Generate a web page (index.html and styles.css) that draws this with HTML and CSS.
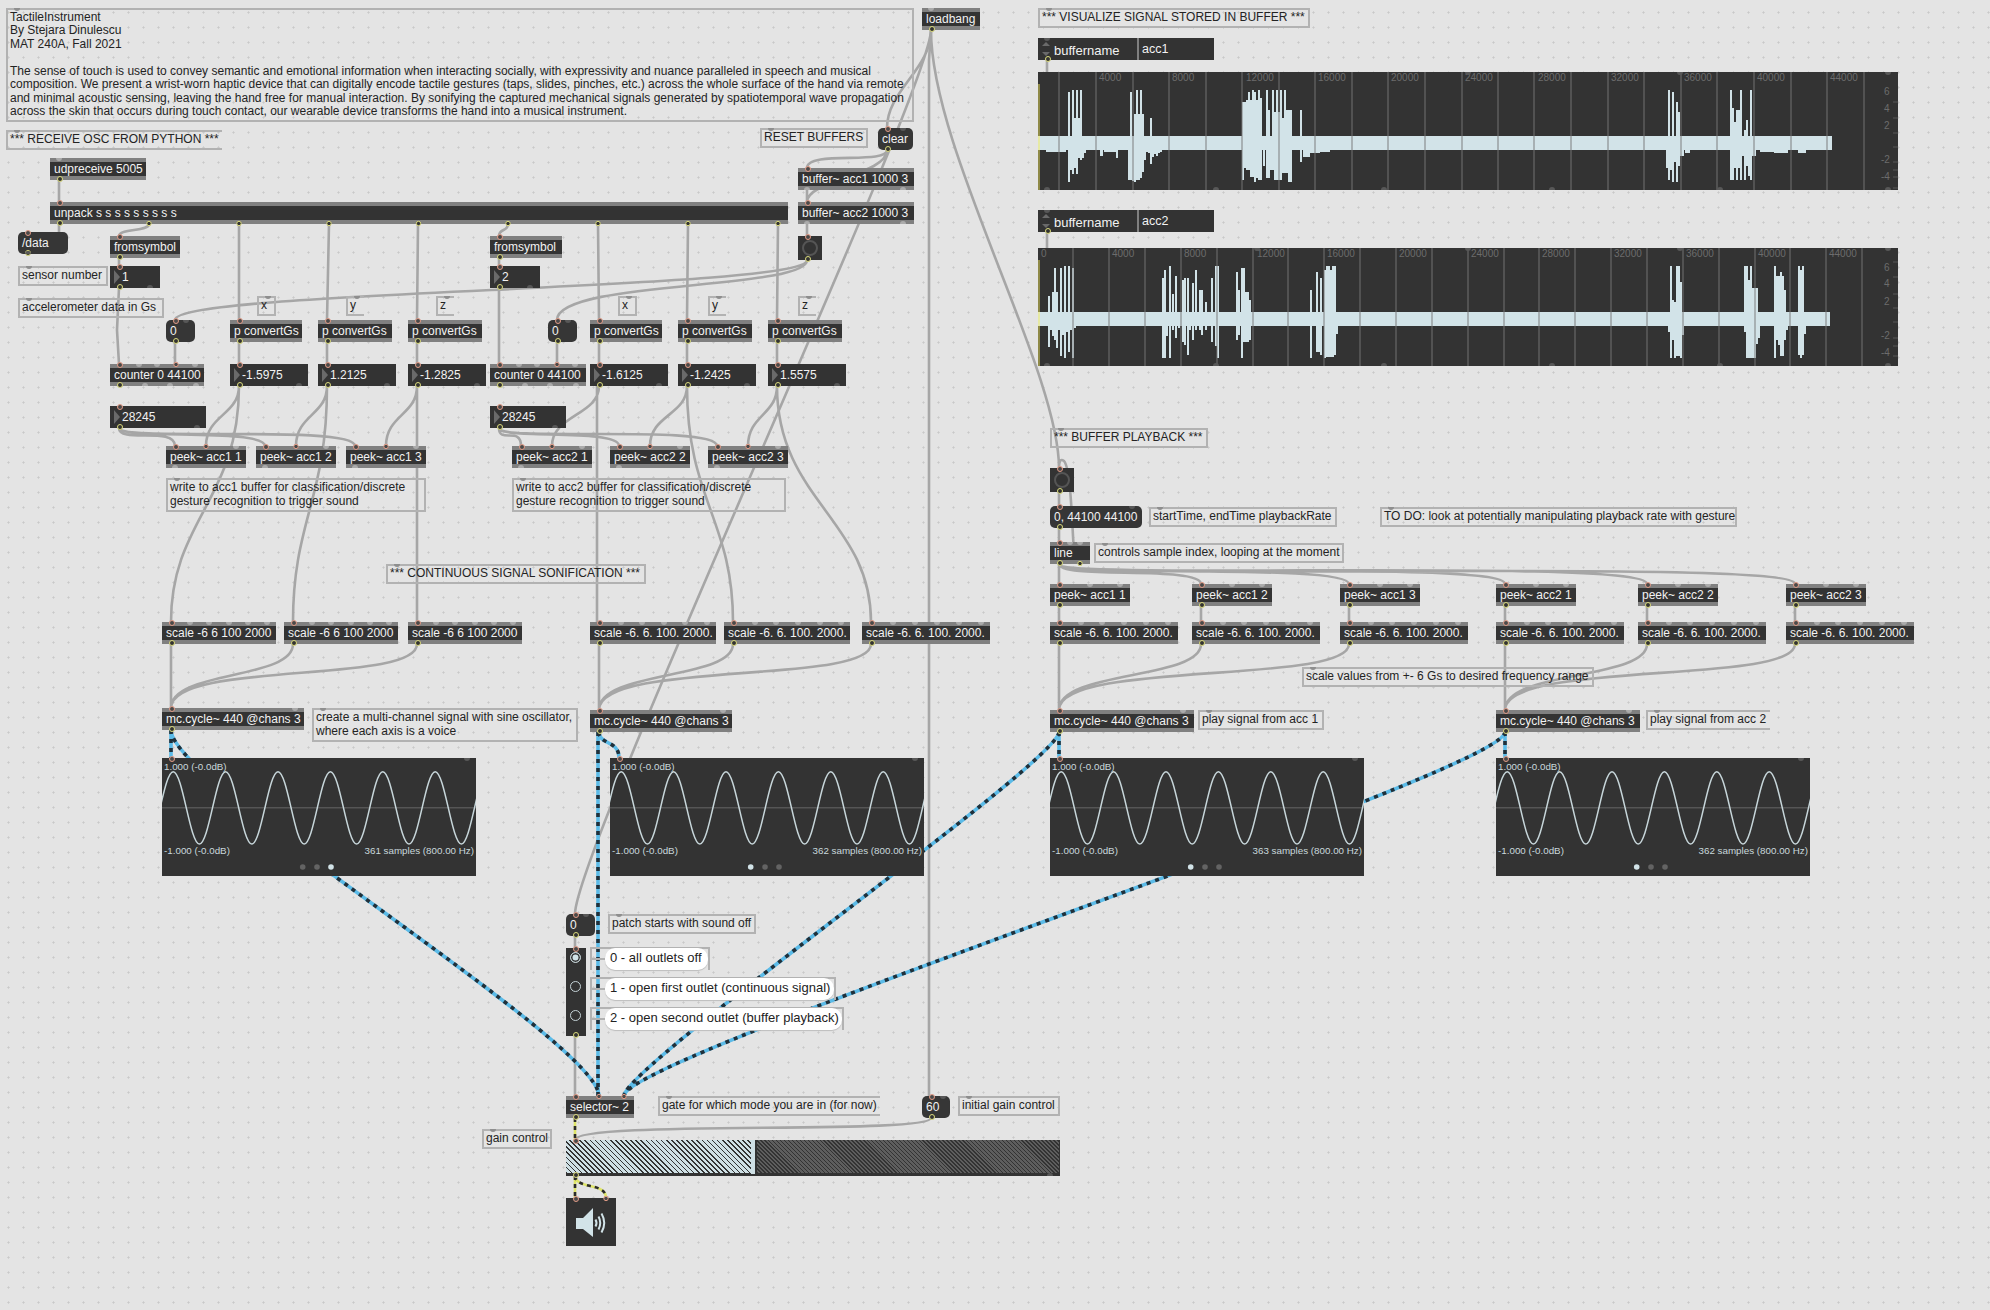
FILE: index.html
```html
<!DOCTYPE html>
<html lang="en">
<head>
<meta charset="utf-8">
<title>TactileInstrument</title>
<link rel="stylesheet" href="styles.css">
</head>
<body>
<main class="patch">

<svg class="layer" viewBox="0 0 1990 1310" aria-hidden="true">
  <defs>
    <g id="sig" fill="none">
      <path d="M171 730V758M171 730C171 784 599 1042 599 1096"/>
      <path d="M599 732C599 745 619 740 619 758M598 732V1096"/>
      <path d="M1059 732V758M1059 732C1059 762 624 1066 624 1096"/>
      <path d="M1505 732V758M1505 732C1505 772 624 1056 624 1096"/>
    </g>
    <g id="mono" fill="none">
      <path d="M575 1118V1140M575 1176V1198M575 1176C577 1190 606 1182 606 1198"/>
    </g>
  </defs>
  <g class="wire">
    <path d="M59 180V202M59 224V232M149 224C149 232 119 228 119 236M239 224V320M329 224L327 320M418 224L417 320M508 224C508 232 499 228 499 236M598 224L599 320M688 224L687 320M778 224L777 320"/>
    <path d="M119 258V266M119 288L117 330L119 364M499 258V266M499 288V364"/>
    <path d="M807 260C807 290 175 290 175 320M807 260C807 290 557 280 557 320"/>
    <path d="M931 30C931 70 887 90 887 128M931 30C931 89 575 850 575 914M887 150C887 165 807 150 807 168M887 150C887 175 807 180 807 202M807 190V202M807 224V236"/>
    <path d="M175 342V364M557 342V364M239 342V364M327 342V364M417 342V364M599 342V364M687 342V364M777 342V364"/>
    <path d="M119 428C119 444 175 426 175 446M119 428C119 440 265 428 265 446M119 428C119 442 355 424 355 446"/>
    <path d="M499 428C499 444 521 426 521 446M499 428C499 440 619 428 619 446M499 428C499 442 717 424 717 446"/>
    <path d="M239 386C239 415 206 415 206 446M239 386C239 500 171 520 171 622M327 386C327 415 296 415 296 446M327 386C327 500 293 520 293 622M417 386C417 415 386 415 386 446M417 386V622"/>
    <path d="M599 386C599 415 552 415 552 446M597 386V622M687 386C687 415 650 415 650 446M687 386C687 500 733 520 733 622M777 386C777 415 748 415 748 446M777 386C777 500 871 520 871 622"/>
    <path d="M171 644V708M293 644C293 680 171 670 171 708M417 644C417 685 171 660 171 708"/>
    <path d="M599 644V710M733 644C733 680 599 670 599 710M871 644C871 685 599 660 599 710"/>
    <path d="M1059 644V710M1201 644C1201 680 1059 670 1059 710M1349 644C1349 685 1059 660 1059 710"/>
    <path d="M1505 644V710M1647 644C1647 680 1505 670 1505 710M1795 644C1795 685 1505 660 1505 710"/>
    <path d="M1059 606V622M1201 606V622M1349 606V622M1505 606V622M1647 606V622M1795 606V622"/>
    <path d="M1059 492V506M1059 528V542M1075 563C1072 540 1072 470 1064 461C1060 458 1059 462 1059 468M931 30C931 150 1059 370 1059 468M931 30L929 60V1096"/>
    <path d="M1059 564V584M1059 564C1059 580 1201 565 1201 584M1059 564C1059 578 1349 563 1349 584M1059 564C1059 580 1505 560 1505 584M1059 564C1059 580 1647 558 1647 584M1059 564C1059 582 1795 558 1795 584"/>
    <path d="M1047 60V72M1047 232V248M575 936V948M575 1036V1096M931 1118C931 1135 575 1120 575 1140"/>
  </g>
  <use href="#sig" class="sig-base"/>
  <use href="#sig" class="sig-dash"/>
  <use href="#mono" class="mono-base"/>
  <use href="#mono" class="mono-dash"/>
</svg>

<div class="c tall-a" style="left:6px;top:8px;width:908px;height:114px">TactileInstrument<br>By Stejara Dinulescu<br>MAT 240A, Fall 2021<br><br>The sense of touch is used to convey semantic and emotional information when interacting socially, with expressivity and nuance paralleled in speech and musical<br>composition. We present a wrist-worn haptic device that can digitally encode tactile gestures (taps, slides, pinches, etc.) across the whole surface of the hand via remote<br>and minimal acoustic sensing, leaving the hand free for manual interaction. By sonifying the captured mechanical signals generated by spatiotemporal wave propagation<br>across the skin that occurs during touch contact, our wearable device transforms the hand into a musical instrument.</div>
<div class="c open" style="left:6px;top:130px;width:216px">*** RECEIVE OSC FROM PYTHON ***</div>
<div class="c" style="left:760px;top:128px;width:108px">RESET BUFFERS</div>
<div class="c" style="left:18px;top:266px;width:90px">sensor number</div>
<div class="c" style="left:18px;top:298px;width:146px">accelerometer data in Gs</div>
<div class="c" style="left:257px;top:296px;width:19px">x</div>
<div class="c open" style="left:346px;top:296px;width:18px">y</div>
<div class="c open" style="left:436px;top:296px;width:18px">z</div>
<div class="c" style="left:618px;top:296px;width:19px">x</div>
<div class="c open" style="left:708px;top:296px;width:18px">y</div>
<div class="c open" style="left:798px;top:296px;width:18px">z</div>
<div class="c" style="left:166px;top:478px;width:260px;height:34px">write to acc1 buffer for classification/discrete<br>gesture recognition to trigger sound</div>
<div class="c" style="left:512px;top:478px;width:274px;height:34px">write to acc2 buffer for classification/discrete<br>gesture recognition to trigger sound</div>
<div class="c" style="left:386px;top:564px;width:260px">*** CONTINUOUS SIGNAL SONIFICATION ***</div>
<div class="c" style="left:312px;top:708px;width:266px;height:34px">create a multi-channel signal with sine oscillator,<br>where each axis is a voice</div>
<div class="c" style="left:1038px;top:8px;width:272px">*** VISUALIZE SIGNAL STORED IN BUFFER ***</div>
<div class="c" style="left:1050px;top:428px;width:158px">*** BUFFER PLAYBACK ***</div>
<div class="c" style="left:1149px;top:507px;width:188px">startTime, endTime playbackRate</div>
<div class="c" style="left:1380px;top:507px;width:357px">TO DO: look at potentially manipulating playback rate with gesture</div>
<div class="c" style="left:1094px;top:543px;width:250px">controls sample index, looping at the moment</div>
<div class="c" style="left:1302px;top:667px;width:292px">scale values from +- 6 Gs to desired frequency range</div>
<div class="c" style="left:1198px;top:710px;width:126px">play signal from acc 1</div>
<div class="c open" style="left:1646px;top:710px;width:124px">play signal from acc 2</div>
<div class="c" style="left:608px;top:914px;width:148px">patch starts with sound off</div>
<div class="c open" style="left:658px;top:1096px;width:222px">gate for which mode you are in (for now)</div>
<div class="c" style="left:958px;top:1096px;width:102px">initial gain control</div>
<div class="c" style="left:482px;top:1129px;width:70px">gain control</div>

<div class="bub" style="left:590px;top:947px;width:120px"><span class="bubble">0 - all outlets off</span></div>
<div class="bub" style="left:590px;top:977px;width:246px"><span class="bubble">1 - open first outlet (continuous signal)</span></div>
<div class="bub" style="left:590px;top:1007px;width:254px"><span class="bubble">2 - open second outlet (buffer playback)</span></div>

<div class="o ni" style="left:50px;top:158px;width:96px">udpreceive 5005</div>
<div class="o" style="left:50px;top:202px;width:738px">unpack s s s s s s s s s</div>
<div class="m" style="left:18px;top:232px;width:50px">/data</div>
<div class="o" style="left:110px;top:236px;width:70px">fromsymbol</div>
<div class="o" style="left:490px;top:236px;width:72px">fromsymbol</div>
<div class="num" style="left:110px;top:266px;width:50px"><i></i>1</div>
<div class="num" style="left:490px;top:266px;width:50px"><i></i>2</div>
<div class="m" style="left:166px;top:320px;width:29px">0</div>
<div class="m" style="left:548px;top:320px;width:29px">0</div>
<div class="o" style="left:230px;top:320px;width:72px">p convertGs</div>
<div class="o" style="left:318px;top:320px;width:74px">p convertGs</div>
<div class="o" style="left:408px;top:320px;width:74px">p convertGs</div>
<div class="o" style="left:590px;top:320px;width:72px">p convertGs</div>
<div class="o" style="left:678px;top:320px;width:74px">p convertGs</div>
<div class="o" style="left:768px;top:320px;width:74px">p convertGs</div>
<div class="o" style="left:110px;top:364px;width:94px">counter 0 44100</div>
<div class="o" style="left:490px;top:364px;width:96px">counter 0 44100</div>
<div class="num" style="left:230px;top:364px;width:78px"><i></i>-1.5975</div>
<div class="num" style="left:318px;top:364px;width:78px"><i></i>1.2125</div>
<div class="num" style="left:408px;top:364px;width:78px"><i></i>-1.2825</div>
<div class="num" style="left:590px;top:364px;width:78px"><i></i>-1.6125</div>
<div class="num" style="left:678px;top:364px;width:78px"><i></i>-1.2425</div>
<div class="num" style="left:768px;top:364px;width:78px"><i></i>1.5575</div>
<div class="num" style="left:110px;top:406px;width:96px"><i></i>28245</div>
<div class="num" style="left:490px;top:406px;width:76px"><i></i>28245</div>
<div class="o no" style="left:166px;top:446px;width:80px">peek~ acc1 1</div>
<div class="o no" style="left:256px;top:446px;width:80px">peek~ acc1 2</div>
<div class="o no" style="left:346px;top:446px;width:80px">peek~ acc1 3</div>
<div class="o no" style="left:512px;top:446px;width:80px">peek~ acc2 1</div>
<div class="o no" style="left:610px;top:446px;width:80px">peek~ acc2 2</div>
<div class="o no" style="left:708px;top:446px;width:80px">peek~ acc2 3</div>
<div class="o" style="left:162px;top:622px;width:114px">scale -6 6 100 2000</div>
<div class="o" style="left:284px;top:622px;width:114px">scale -6 6 100 2000</div>
<div class="o" style="left:408px;top:622px;width:114px">scale -6 6 100 2000</div>
<div class="o" style="left:590px;top:622px;width:126px">scale -6. 6. 100. 2000.</div>
<div class="o" style="left:724px;top:622px;width:126px">scale -6. 6. 100. 2000.</div>
<div class="o" style="left:862px;top:622px;width:128px">scale -6. 6. 100. 2000.</div>
<div class="m" style="left:878px;top:128px;width:35px">clear</div>
<div class="o no" style="left:798px;top:168px;width:116px">buffer~ acc1 1000 3</div>
<div class="o no" style="left:798px;top:202px;width:116px">buffer~ acc2 1000 3</div>
<div class="btn" style="left:798px;top:236px"><i></i></div>
<div class="o ni" style="left:922px;top:8px;width:58px">loadbang</div>

<div class="tabs" style="left:1038px;top:38px">
  <div class="umenu"><svg class="arrows" viewBox="0 0 8 14" aria-hidden="true"><path d="M4 0L8 4H0ZM0 10H8L4 14Z"/></svg>buffername</div>
  <div class="tedit">acc1</div>
</div>
<div class="tabs" style="left:1038px;top:210px">
  <div class="umenu"><svg class="arrows" viewBox="0 0 8 14" aria-hidden="true"><path d="M4 0L8 4H0ZM0 10H8L4 14Z"/></svg>buffername</div>
  <div class="tedit">acc2</div>
</div>

<svg class="wave" style="left:1038px;top:72px" viewBox="1038 72 860 118" aria-label="acc1 waveform">
  <path class="w-fill" d="M1040 136H1832V150H1040ZM1046 150H1066V152H1046ZM1100 150H1103V156H1100ZM1104 150H1116V152H1104ZM1116 150H1118V158H1116ZM1303 150H1310V157H1303ZM1310 150H1320V153H1310ZM1320 150H1330V152H1320ZM1685 150H1690V153H1685ZM1760 150H1774V152H1760ZM1774 150H1788V153H1774ZM1798 150H1806V153H1798Z"/>
  <path class="w-col" d="M1069 92V182M1071 136V170M1073 90V174M1075 118V168M1077 90V174M1079 118V158M1081 90V160M1083 136V158M1085 136V153M1129 136V180M1131 92V180M1133 136V181M1135 114V182M1137 90V180M1139 114V180M1141 90V178M1143 114V172M1145 136V160M1147 136V152M1149 136V153M1151 118V164M1153 136V157M1155 136V154M1157 136V156M1159 136V153M1161 136V152M1243 102V180M1245 102V168M1247 100V170M1249 92V170M1251 100V177M1253 90V177M1255 92V182M1257 100V178M1259 90V180M1261 98V180M1264 136V166M1267 90V178M1269 110V178M1271 136V170M1273 90V170M1275 112V180M1277 90V180M1279 112V180M1281 90V180M1283 118V173M1285 90V173M1287 110V173M1289 110V182M1291 110V182M1301 110V162M1667 136V168M1669 90V180M1671 136V170M1673 92V182M1675 136V162M1677 102V182M1679 112V166M1681 136V156M1683 136V156M1731 90V180M1733 108V180M1735 122V168M1737 110V180M1739 110V168M1741 90V180M1743 136V156M1745 130V180M1747 120V166M1749 136V176M1751 90V180M1753 136V156M1755 136V156"/>
  <path class="w-cur" d="M1039 84V136M1039 150V190"/>
  <path class="w-curb" d="M1039 136V150"/>
  <path class="w-grid" d="M1059 72V190M1096 72V190M1133 72V190M1169 72V190M1206 72V190M1242 72V190M1279 72V190M1315 72V190M1352 72V190M1388 72V190M1425 72V190M1462 72V190M1498 72V190M1534 72V190M1571 72V190M1608 72V190M1644 72V190M1681 72V190M1717 72V190M1754 72V190M1791 72V190M1827 72V190M1864 72V190"/>
  <path class="w-tick" d="M1893 102H1898M1893 118H1898M1893 133H1898M1893 147H1898M1893 162H1898M1893 170H1898M1893 177H1898M1893 188H1898"/>
  <g class="w-lab">
    <text x="1099" y="81">4000</text><text x="1172" y="81">8000</text><text x="1246" y="81">12000</text><text x="1318" y="81">16000</text><text x="1391" y="81">20000</text><text x="1465" y="81">24000</text><text x="1538" y="81">28000</text><text x="1611" y="81">32000</text><text x="1684" y="81">36000</text><text x="1757" y="81">40000</text><text x="1830" y="81">44000</text>
    <text x="1884" y="95">6</text><text x="1884" y="112">4</text><text x="1884" y="129">2</text><text x="1881" y="163">-2</text><text x="1881" y="180">-4</text>
  </g>
</svg>

<svg class="wave" style="left:1038px;top:248px" viewBox="1038 248 860 118" aria-label="acc2 waveform">
  <path class="w-fill" d="M1040 312H1830V326H1040Z"/>
  <path class="w-col" d="M1049 296V347M1051 312V330M1053 292V336M1055 268V340M1057 292V348M1059 312V330M1061 268V356M1063 312V335M1065 266V358M1067 312V332M1069 266V352M1071 312V330M1073 268V358M1075 312V328M1163 278V358M1165 270V358M1167 312V336M1170 266V358M1173 294V330M1176 276V338M1179 312V328M1183 280V342M1185 278V345M1188 278V355M1190 312V330M1193 283V340M1196 270V330M1200 290V330M1202 290V335M1206 302V330M1212 278V342M1216 266V346M1218 266V358M1237 272V340M1239 290V335M1242 268V358M1244 268V342M1246 292V342M1248 292V342M1250 300V340M1311 290V358M1317 272V352M1319 312V352M1321 278V355M1325 270V358M1327 266V357M1329 266V357M1331 270V357M1333 266V357M1335 266V355M1337 312V334M1669 312V332M1671 266V358M1673 300V340M1675 302V358M1677 266V356M1679 266V356M1681 282V358M1683 312V335M1745 266V332M1747 266V358M1749 280V358M1751 266V358M1753 288V358M1755 288V358M1757 288V344M1759 312V338M1775 266V358M1777 276V340M1779 276V345M1781 272V356M1783 276V356M1785 290V340M1787 312V330M1799 266V355M1801 270V358M1803 266V355M1805 312V334"/>
  <path class="w-cur" d="M1039 260V312M1039 326V366"/>
  <path class="w-curb" d="M1039 312V326"/>
  <path class="w-grid" d="M1073 248V366M1109 248V366M1145 248V366M1181 248V366M1217 248V366M1253 248V366M1288 248V366M1324 248V366M1360 248V366M1396 248V366M1432 248V366M1468 248V366M1504 248V366M1539 248V366M1575 248V366M1611 248V366M1647 248V366M1683 248V366M1719 248V366M1755 248V366M1790 248V366M1826 248V366M1862 248V366"/>
  <path class="w-tick" d="M1893 262H1898M1893 277H1898M1893 294H1898M1893 308H1898M1893 322H1898M1893 338H1898M1893 346H1898M1893 356H1898"/>
  <g class="w-lab">
    <text x="1041" y="257">0</text><text x="1112" y="257">4000</text><text x="1184" y="257">8000</text><text x="1257" y="257">12000</text><text x="1327" y="257">16000</text><text x="1399" y="257">20000</text><text x="1471" y="257">24000</text><text x="1542" y="257">28000</text><text x="1614" y="257">32000</text><text x="1686" y="257">36000</text><text x="1758" y="257">40000</text><text x="1829" y="257">44000</text>
    <text x="1884" y="271">6</text><text x="1884" y="287">4</text><text x="1884" y="305">2</text><text x="1881" y="339">-2</text><text x="1881" y="356">-4</text>
  </g>
</svg>

<div class="btn" style="left:1050px;top:468px"><i></i></div>
<div class="m" style="left:1050px;top:506px;width:92px">0, 44100 44100</div>
<div class="o" style="left:1050px;top:542px;width:40px">line</div>
<div class="o" style="left:1050px;top:584px;width:80px">peek~ acc1 1</div>
<div class="o" style="left:1192px;top:584px;width:80px">peek~ acc1 2</div>
<div class="o" style="left:1340px;top:584px;width:80px">peek~ acc1 3</div>
<div class="o" style="left:1496px;top:584px;width:80px">peek~ acc2 1</div>
<div class="o" style="left:1638px;top:584px;width:80px">peek~ acc2 2</div>
<div class="o" style="left:1786px;top:584px;width:80px">peek~ acc2 3</div>
<div class="o" style="left:1050px;top:622px;width:128px">scale -6. 6. 100. 2000.</div>
<div class="o" style="left:1192px;top:622px;width:128px">scale -6. 6. 100. 2000.</div>
<div class="o" style="left:1340px;top:622px;width:128px">scale -6. 6. 100. 2000.</div>
<div class="o" style="left:1496px;top:622px;width:128px">scale -6. 6. 100. 2000.</div>
<div class="o" style="left:1638px;top:622px;width:128px">scale -6. 6. 100. 2000.</div>
<div class="o" style="left:1786px;top:622px;width:128px">scale -6. 6. 100. 2000.</div>
<div class="o" style="left:162px;top:708px;width:142px">mc.cycle~ 440 @chans 3</div>
<div class="o" style="left:590px;top:710px;width:142px">mc.cycle~ 440 @chans 3</div>
<div class="o" style="left:1050px;top:710px;width:144px">mc.cycle~ 440 @chans 3</div>
<div class="o" style="left:1496px;top:710px;width:144px">mc.cycle~ 440 @chans 3</div>

<svg class="sine-defs" aria-hidden="true"><defs><path id="sine" d="M-15 86c9.5 0 16.7-72.3 26.2-72.3s16.7 72.3 26.2 72.3s16.7-72.3 26.2-72.3s16.7 72.3 26.2 72.3s16.7-72.3 26.2-72.3s16.7 72.3 26.2 72.3s16.7-72.3 26.2-72.3s16.7 72.3 26.2 72.3s16.7-72.3 26.2-72.3s16.7 72.3 26.2 72.3s16.7-72.3 26.2-72.3s16.7 72.3 26.2 72.3s16.7-72.3 26.2-72.3"/></defs></svg>
<div class="scope" style="left:162px;top:758px">
  <svg viewBox="0 0 314 118"><path class="zero" d="M0 49.7H314"/><use href="#sine" class="sine"/><circle class="dot" cx="140.7" cy="109" r="2.8"/><circle class="dot" cx="155" cy="109" r="2.8"/><circle class="dot on" cx="169" cy="109" r="2.8"/><g class="s-lab"><text x="2" y="12">1.000 (-0.0dB)</text><text x="2" y="96">-1.000 (-0.0dB)</text><text class="end" x="312" y="96">361 samples (800.00 Hz)</text></g></svg>
</div>
<div class="scope" style="left:610px;top:758px">
  <svg viewBox="0 0 314 118"><path class="zero" d="M0 49.7H314"/><use href="#sine" class="sine"/><circle class="dot on" cx="140.7" cy="109" r="2.8"/><circle class="dot" cx="155" cy="109" r="2.8"/><circle class="dot" cx="169" cy="109" r="2.8"/><g class="s-lab"><text x="2" y="12">1.000 (-0.0dB)</text><text x="2" y="96">-1.000 (-0.0dB)</text><text class="end" x="312" y="96">362 samples (800.00 Hz)</text></g></svg>
</div>
<div class="scope" style="left:1050px;top:758px">
  <svg viewBox="0 0 314 118"><path class="zero" d="M0 49.7H314"/><use href="#sine" class="sine"/><circle class="dot on" cx="140.7" cy="109" r="2.8"/><circle class="dot" cx="155" cy="109" r="2.8"/><circle class="dot" cx="169" cy="109" r="2.8"/><g class="s-lab"><text x="2" y="12">1.000 (-0.0dB)</text><text x="2" y="96">-1.000 (-0.0dB)</text><text class="end" x="312" y="96">363 samples (800.00 Hz)</text></g></svg>
</div>
<div class="scope" style="left:1496px;top:758px">
  <svg viewBox="0 0 314 118"><path class="zero" d="M0 49.7H314"/><use href="#sine" class="sine"/><circle class="dot on" cx="140.7" cy="109" r="2.8"/><circle class="dot" cx="155" cy="109" r="2.8"/><circle class="dot" cx="169" cy="109" r="2.8"/><g class="s-lab"><text x="2" y="12">1.000 (-0.0dB)</text><text x="2" y="96">-1.000 (-0.0dB)</text><text class="end" x="312" y="96">362 samples (800.00 Hz)</text></g></svg>
</div>

<div class="m" style="left:566px;top:914px;width:29px">0</div>
<div class="radio" style="left:566px;top:948px"><i class="sel"></i><i></i><i></i></div>
<div class="o" style="left:566px;top:1096px;width:68px">selector~ 2</div>
<div class="m" style="left:922px;top:1096px;width:28px">60</div>
<div class="gain" style="left:566px;top:1140px;width:494px"><div class="g-on" style="width:185px"></div><div class="g-knob"></div><div class="g-off"></div></div>
<div class="dac" style="left:566px;top:1198px">
  <svg viewBox="0 0 50 48" aria-hidden="true"><path class="spk" d="M10 20H17L27 10V39L17 31H10Z"/><path class="arc" d="M29.5 21.5Q31.5 25 29.5 28.5M32.5 18.5Q36 25 32.5 31.5M35.5 15.5Q41 25 35.5 34.5"/></svg>
</div>

<svg class="layer top" viewBox="0 0 1990 1310" aria-hidden="true">
  <path class="b-light" d="M187 622a3 3 0 0 0 6 0zM206 622a3 3 0 0 0 6 0zM226 622a3 3 0 0 0 6 0zM245 622a3 3 0 0 0 6 0zM264 622a3 3 0 0 0 6 0zM309 622a3 3 0 0 0 6 0zM328 622a3 3 0 0 0 6 0zM348 622a3 3 0 0 0 6 0zM367 622a3 3 0 0 0 6 0zM386 622a3 3 0 0 0 6 0zM433 622a3 3 0 0 0 6 0zM452 622a3 3 0 0 0 6 0zM472 622a3 3 0 0 0 6 0zM491 622a3 3 0 0 0 6 0zM510 622a3 3 0 0 0 6 0zM618 622a3 3 0 0 0 6 0zM639 622a3 3 0 0 0 6 0zM661 622a3 3 0 0 0 6 0zM682 622a3 3 0 0 0 6 0zM704 622a3 3 0 0 0 6 0zM752 622a3 3 0 0 0 6 0zM773 622a3 3 0 0 0 6 0zM795 622a3 3 0 0 0 6 0zM817 622a3 3 0 0 0 6 0zM838 622a3 3 0 0 0 6 0zM890 622a3 3 0 0 0 6 0zM912 622a3 3 0 0 0 6 0zM934 622a3 3 0 0 0 6 0zM956 622a3 3 0 0 0 6 0zM978 622a3 3 0 0 0 6 0zM1078 622a3 3 0 0 0 6 0zM1099 622a3 3 0 0 0 6 0zM1121 622a3 3 0 0 0 6 0zM1143 622a3 3 0 0 0 6 0zM1165 622a3 3 0 0 0 6 0zM1220 622a3 3 0 0 0 6 0zM1241 622a3 3 0 0 0 6 0zM1263 622a3 3 0 0 0 6 0zM1285 622a3 3 0 0 0 6 0zM1307 622a3 3 0 0 0 6 0zM1368 622a3 3 0 0 0 6 0zM1389 622a3 3 0 0 0 6 0zM1411 622a3 3 0 0 0 6 0zM1433 622a3 3 0 0 0 6 0zM1455 622a3 3 0 0 0 6 0zM1524 622a3 3 0 0 0 6 0zM1545 622a3 3 0 0 0 6 0zM1567 622a3 3 0 0 0 6 0zM1589 622a3 3 0 0 0 6 0zM1611 622a3 3 0 0 0 6 0zM1666 622a3 3 0 0 0 6 0zM1687 622a3 3 0 0 0 6 0zM1709 622a3 3 0 0 0 6 0zM1731 622a3 3 0 0 0 6 0zM1753 622a3 3 0 0 0 6 0zM1814 622a3 3 0 0 0 6 0zM1835 622a3 3 0 0 0 6 0zM1857 622a3 3 0 0 0 6 0zM1879 622a3 3 0 0 0 6 0zM1901 622a3 3 0 0 0 6 0zM233 446a3 3 0 0 0 6 0zM323 446a3 3 0 0 0 6 0zM413 446a3 3 0 0 0 6 0zM579 446a3 3 0 0 0 6 0zM677 446a3 3 0 0 0 6 0zM775 446a3 3 0 0 0 6 0zM1087 584a3 3 0 0 0 6 0zM1117 584a3 3 0 0 0 6 0zM1229 584a3 3 0 0 0 6 0zM1259 584a3 3 0 0 0 6 0zM1377 584a3 3 0 0 0 6 0zM1407 584a3 3 0 0 0 6 0zM1533 584a3 3 0 0 0 6 0zM1563 584a3 3 0 0 0 6 0zM1675 584a3 3 0 0 0 6 0zM1705 584a3 3 0 0 0 6 0zM1823 584a3 3 0 0 0 6 0zM1853 584a3 3 0 0 0 6 0zM292 708a3 3 0 0 0 6 0zM720 710a3 3 0 0 0 6 0zM1180 710a3 3 0 0 0 6 0zM1626 710a3 3 0 0 0 6 0zM56 158a3 3 0 0 0 6 0zM928 8a3 3 0 0 0 6 0zM136 364a3 3 0 0 0 6 0zM154 364a3 3 0 0 0 6 0zM192 364a3 3 0 0 0 6 0zM516 364a3 3 0 0 0 6 0zM534 364a3 3 0 0 0 6 0zM572 364a3 3 0 0 0 6 0zM1067 542a3 3 0 0 0 6 0zM1077 542a3 3 0 0 0 6 0z"/>
  <path class="b-light" d="M142 386a3 3 0 0 1 6 0zM167 386a3 3 0 0 1 6 0zM193 386a3 3 0 0 1 6 0zM522 386a3 3 0 0 1 6 0zM547 386a3 3 0 0 1 6 0zM573 386a3 3 0 0 1 6 0zM172 468a3 3 0 0 1 6 0zM262 468a3 3 0 0 1 6 0zM352 468a3 3 0 0 1 6 0zM518 468a3 3 0 0 1 6 0zM616 468a3 3 0 0 1 6 0zM714 468a3 3 0 0 1 6 0zM804 190a3 3 0 0 1 6 0zM900 190a3 3 0 0 1 6 0zM804 224a3 3 0 0 1 6 0zM900 224a3 3 0 0 1 6 0z"/>
  <path class="b-dark" d="M183 320a3 3 0 0 0 6 0zM565 320a3 3 0 0 0 6 0zM900 128a3 3 0 0 0 6 0zM1129 506a3 3 0 0 0 6 0zM583 914a3 3 0 0 0 6 0zM940 1096a3 3 0 0 0 6 0zM1465 72a3 3 0 0 0 6 0zM1677 72a3 3 0 0 0 6 0zM1885 72a3 3 0 0 0 6 0zM1254 248a3 3 0 0 0 6 0zM1465 248a3 3 0 0 0 6 0zM1677 248a3 3 0 0 0 6 0zM1885 248a3 3 0 0 0 6 0zM464 758a3 3 0 0 0 6 0zM912 758a3 3 0 0 0 6 0zM1352 758a3 3 0 0 0 6 0zM1798 758a3 3 0 0 0 6 0zM1044 38a3 3 0 0 0 6 0zM1044 210a3 3 0 0 0 6 0z"/>
  <path class="b-dark" d="M147 288a3 3 0 0 1 6 0zM527 288a3 3 0 0 1 6 0zM296 386a3 3 0 0 1 6 0zM384 386a3 3 0 0 1 6 0zM474 386a3 3 0 0 1 6 0zM656 386a3 3 0 0 1 6 0zM744 386a3 3 0 0 1 6 0zM834 386a3 3 0 0 1 6 0zM194 428a3 3 0 0 1 6 0zM552 428a3 3 0 0 1 6 0zM25 254a3 3 0 0 1 6 0zM1044 190a3 3 0 0 1 6 0zM1213 190a3 3 0 0 1 6 0zM1381 190a3 3 0 0 1 6 0zM1549 190a3 3 0 0 1 6 0zM1717 190a3 3 0 0 1 6 0zM1885 190a3 3 0 0 1 6 0zM1044 366a3 3 0 0 1 6 0zM1213 366a3 3 0 0 1 6 0zM1381 366a3 3 0 0 1 6 0zM1549 366a3 3 0 0 1 6 0zM1717 366a3 3 0 0 1 6 0zM1885 366a3 3 0 0 1 6 0zM1047 1176a3 3 0 0 1 6 0z"/>
  <g class="p-in">
    <circle cx="176" cy="364.5" r="2.2"/><circle cx="557" cy="364.5" r="2.2"/><circle cx="206" cy="446.5" r="2.2"/><circle cx="296" cy="446.5" r="2.2"/><circle cx="386" cy="446.5" r="2.2"/><circle cx="552" cy="446.5" r="2.2"/><circle cx="650" cy="446.5" r="2.2"/><circle cx="748" cy="446.5" r="2.2"/><circle cx="599" cy="1096.5" r="2.2"/><circle cx="624" cy="1096.5" r="2.2"/><circle cx="606" cy="1198.5" r="2.2"/>
  </g>
  <g class="p-out">
    <circle cx="149" cy="223.5" r="2.2"/><circle cx="239" cy="223.5" r="2.2"/><circle cx="329" cy="223.5" r="2.2"/><circle cx="418.5" cy="223.5" r="2.2"/><circle cx="508" cy="223.5" r="2.2"/><circle cx="598" cy="223.5" r="2.2"/><circle cx="688" cy="223.5" r="2.2"/><circle cx="778" cy="223.5" r="2.2"/><circle cx="1080" cy="563.5" r="2.2"/>
  </g>
</svg>
</main>
</body>
</html>
```

FILE: styles.css
```css
* { box-sizing: border-box; }
html, body { margin: 0; padding: 0; }
body { background: #e4e4e4; font: 12px/14px "Liberation Sans", Arial, sans-serif; }

.patch {
  position: relative;
  width: 1990px;
  height: 1310px;
  overflow: hidden;
  background-color: #e4e4e4;
  background-image: radial-gradient(circle, #c9c9c9 0, #c9c9c9 .9px, transparent 1.2px);
  background-size: 15px 15px;
  background-position: 1px 5px;
}

.layer { position: absolute; left: 0; top: 0; width: 1990px; height: 1310px; pointer-events: none; }

.wire path { fill: none; stroke: #a6a6a6; stroke-width: 2.6; }
.sig-base { stroke: #5bbbe8; stroke-width: 3.6; }
.sig-dash { stroke: #20303a; stroke-width: 3.6; stroke-dasharray: 4 5; }
.mono-base { stroke: #dfe56a; stroke-width: 2.6; }
.mono-dash { stroke: #2b2b2b; stroke-width: 2.6; stroke-dasharray: 4 4; }

/* comment boxes */
.c {
  position: absolute;
  height: 20px;
  border: 2px solid #b2b2b2;
  padding: 0 2px;
  color: #232323;
  line-height: 14px;
  white-space: nowrap;
}
.c.open { border-right: 0; }
.c.tall-a { padding-top: 1px; line-height: 13.45px; }
.c::before {
  content: "";
  position: absolute;
  left: 6px;
  top: -2px;
  width: 6px;
  height: 3px;
  border-radius: 0 0 3px 3px;
  background: #8e8e8e;
}

/* patch objects */
.o, .m, .num {
  position: absolute;
  height: 22px;
  color: #f2f2f2;
  line-height: 22px;
  white-space: nowrap;
  padding: 0 4px;
}
.o { background: linear-gradient(#808080 4px, #333 4px, #333 18px, #808080 18px); }
.m { background: #363636; border-radius: 5px; }
.num { background: #333; display: flex; align-items: center; padding-left: 4px; gap: 2px; }
.num i {
  display: block;
  width: 0;
  height: 0;
  border-left: 6px solid #6a6a6a;
  border-top: 7px solid transparent;
  border-bottom: 7px solid transparent;
}

.o::before, .m::before, .num::before, .btn::before, .radio::before, .gain::before, .dac::before, .scope::before, .tabs::after, .wave-in::before {
  content: "";
  position: absolute;
  left: 6.8px;
  top: -2px;
  width: 4.4px;
  height: 4.4px;
  border-radius: 50%;
  border: 1px solid #e39b86;
  background: #4a4a4a;
  z-index: 2;
}
.o::after, .m::after, .num::after, .btn::after, .radio::after, .gain::after {
  content: "";
  position: absolute;
  left: 6.8px;
  bottom: -2px;
  width: 4.4px;
  height: 4.4px;
  border-radius: 50%;
  border: 1px solid #dcdc7c;
  background: #333;
  z-index: 2;
}
.o.ni::before, .o.no::after { display: none; }

.btn { position: absolute; width: 24px; height: 24px; background: #333; display: flex; align-items: center; justify-content: center; }
.btn i { display: block; width: 16px; height: 16px; border-radius: 50%; border: 2px solid #555; }

/* buffer name menu + text */
.tabs { position: absolute; display: flex; height: 22px; width: 176px; gap: 2px; background: #808080; color: #f2f2f2; }
.tabs::after { left: 6.8px; top: auto; bottom: -2px; border-color: #dcdc7c; background: #333; }
.umenu { width: 99px; background: #333; font-size: 13px; line-height: 26px; padding-left: 16px; position: relative; }
.tedit { flex: 1; background: #333; padding-left: 3px; font-size: 12.5px; line-height: 22px; }
.arrows { position: absolute; left: 4px; top: 4px; width: 8px; height: 14px; fill: #6a6a6a; }

/* waveforms */
.wave { position: absolute; width: 860px; height: 118px; background: #333; display: block; overflow: hidden; }
.w-fill { fill: #d2e3e8; }
.w-col { fill: none; stroke: #d2e3e8; stroke-width: 2; }
.w-cur { stroke: #8f8a48; stroke-width: 2; fill: none; }
.w-curb { stroke: #e6e9a4; stroke-width: 2; fill: none; }
.w-grid { stroke: rgba(120, 120, 120, .62); stroke-width: 1.5; fill: none; }
.w-tick { stroke: #4c4c4c; stroke-width: 1.5; fill: none; }
.w-lab { fill: #6c6c6c; font: 10px "Liberation Sans", Arial, sans-serif; }

/* scopes */
.sine-defs { position: absolute; width: 0; height: 0; }
.scope { position: absolute; width: 314px; height: 118px; background: #333; }
.scope svg { display: block; width: 314px; height: 118px; }
.zero { stroke: #555; stroke-width: 1.5; fill: none; }
.sine { fill: none; stroke: #c7d6da; stroke-width: 1.5; }
.dot { fill: #636363; }
.dot.on { fill: #d2e3e8; }
.s-lab { fill: #c9d8dc; font: 9.8px "Liberation Sans", Arial, sans-serif; }
.s-lab .end { text-anchor: end; }

/* radio group + labels */
.radio {
  position: absolute;
  width: 20px;
  height: 88px;
  background: #333;
  display: flex;
  flex-direction: column;
  align-items: center;
  padding: 3.5px 1px 0 0;
  gap: 18px;
}
.radio i { display: block; width: 11px; height: 11px; border-radius: 50%; border: 1px solid #c4d2d6; flex: none; }
.radio i.sel { background: #d2e3e8; box-shadow: inset 0 0 0 1.5px #333; }

.bub {
  position: absolute;
  height: 23px;
  border: 2px solid #b2b2b2;
  border-bottom: 0;
  padding-left: 13px;
}
.bub::before { content: ""; position: absolute; left: 0; top: 9px; width: 13px; height: 2px; background: #b2b2b2; }
.bubble {
  display: block;
  height: 22px;
  margin-top: -1px;
  background: #fff;
  border-radius: 10px;
  box-shadow: 0 1px 1px #bdbdbd;
  color: #222;
  font-size: 13px;
  line-height: 19px;
  padding: 0 5px;
  white-space: nowrap;
}

/* gain slider */
.gain { position: absolute; height: 36px; display: flex; background: #333; padding: 0 0 3px; }
.g-on { flex: none; height: 33px; background: repeating-linear-gradient(45deg, #333 0, #333 1.2px, #cfe0e5 1.2px, #cfe0e5 3.6px); }
.g-knob { flex: none; width: 4px; height: 34px; background: #cfe0e5; margin-right: 2px; }
.g-off { flex: 1; height: 33px; margin-right: 1px; background: repeating-linear-gradient(45deg, #333 0, #333 1px, #5e5e5e 1px, #5e5e5e 2.8px); }

/* speaker */
.dac { position: absolute; width: 50px; height: 48px; background: #333; }
.dac svg { display: block; width: 50px; height: 48px; }
.spk { fill: #d2e3e8; }
.arc { fill: none; stroke: #d2e3e8; stroke-width: 2; }

/* extra ports */
.layer.top { z-index: 3; }
.b-light { fill: #ababab; }
.b-dark { fill: #585858; }
.p-in circle { fill: #4a4a4a; stroke: #e39b86; stroke-width: 1; }
.p-out circle { fill: #333; stroke: #dcdc7c; stroke-width: 1; }
```
